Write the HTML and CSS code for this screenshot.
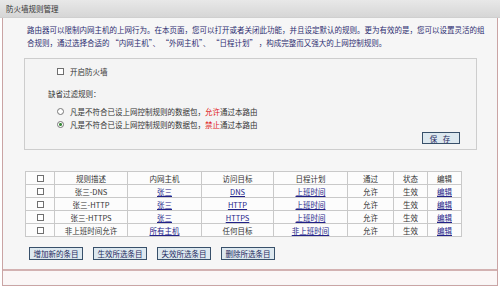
FILE: index.html
```
<!DOCTYPE html>
<html lang="zh-CN">
<head>
  <meta charset="UTF-8" />
  <title>防火墙规则管理</title>
  <link rel="stylesheet" href="styles.css">
</head>
<body>

  <!-- 标题栏 -->
  <div class="title-bar">防火墙规则管理</div>

  <div class="frame">
    <div class="main">

      <!-- 说明文字 -->
      <p class="desc">
        路由器可以限制内网主机的上网行为。在本页面，您可以打开或者关闭此功能，并且设定默认的规则。更为有效的是，您可以设置灵活的组<br>
        合规则，通过选择合适的 “内网主机”、 “外网主机”、 “日程计划” ，构成完整而又强大的上网控制规则。
      </p>

      <!-- 开关 + 缺省规则 -->
      <div class="setting-box">
        <label class="row switch-row"><input type="checkbox" class="chk" /> 开启防火墙</label>
        <div class="row rule-title">缺省过滤规则：</div>
        <label class="row radio-row"><input type="radio" name="def" class="rad" /> 凡是不符合已设上网控制规则的数据包，<span class="red">允许</span>通过本路由</label>
        <label class="row radio-row"><input type="radio" name="def" class="rad" checked /> 凡是不符合已设上网控制规则的数据包，<span class="red">禁止</span>通过本路由</label>
        <div class="save-row"><button class="btn save-btn">保 存</button></div>
      </div>

      <!-- 规则列表 -->
      <table class="rules">
        <colgroup>
          <col style="width:29px"><col style="width:73px"><col style="width:74px"><col style="width:72px">
          <col style="width:74px"><col style="width:46px"><col style="width:34px"><col style="width:34px">
        </colgroup>
        <tr>
          <td><input type="checkbox" class="chk" /></td>
          <td>规则描述</td><td>内网主机</td><td>访问目标</td><td>日程计划</td><td>通过</td><td>状态</td><td>编辑</td>
        </tr>
        <tr>
          <td><input type="checkbox" class="chk" /></td>
          <td>张三-DNS</td><td><a href="#">张三</a></td><td><a href="#">DNS</a></td><td><a href="#">上班时间</a></td><td>允许</td><td>生效</td><td><a href="#">编辑</a></td>
        </tr>
        <tr>
          <td><input type="checkbox" class="chk" /></td>
          <td>张三-HTTP</td><td><a href="#">张三</a></td><td><a href="#">HTTP</a></td><td><a href="#">上班时间</a></td><td>允许</td><td>生效</td><td><a href="#">编辑</a></td>
        </tr>
        <tr>
          <td><input type="checkbox" class="chk" /></td>
          <td>张三-HTTPS</td><td><a href="#">张三</a></td><td><a href="#">HTTPS</a></td><td><a href="#">上班时间</a></td><td>允许</td><td>生效</td><td><a href="#">编辑</a></td>
        </tr>
        <tr>
          <td><input type="checkbox" class="chk" /></td>
          <td>非上班时间允许</td><td><a href="#">所有主机</a></td><td>任何目标</td><td><a href="#">非上班时间</a></td><td>允许</td><td>生效</td><td><a href="#">编辑</a></td>
        </tr>
      </table>

      <!-- 操作按钮 -->
      <div class="actions">
        <button class="btn">增加新的条目</button>
        <button class="btn">生效所选条目</button>
        <button class="btn">失效所选条目</button>
        <button class="btn">删除所选条目</button>
      </div>

    </div>
    <div class="foot"></div>
  </div>

</body>
</html>
```

FILE: styles.css
```
/* ===== 基础 ===== */
*{box-sizing:border-box}
body{
  margin:0;
  background:#fff;
  font-family:"Noto Sans CJK SC","DejaVu Sans",sans-serif;
  font-size:7.5px;
  color:#333;
}

/* ===== 标题栏 ===== */
.title-bar{
  height:18px;
  line-height:18px;
  padding-left:6px;
  background:linear-gradient(#e8e8e8,#d6d6d6);
  border-bottom:1px solid #cfcfcf;
  color:#333;
}

/* ===== 外框 ===== */
.frame{
  margin:0 2px;
  height:268px;
  border:1px solid #caa4a4;
  border-top:none;
  background:#f6f6f6;
}
.main{height:251px}
.foot{
  height:15px;
  border-top:2px solid #d3b1b1;
  background:#fbf6f6;
}

/* ===== 说明文字 ===== */
.desc{
  margin:0;
  padding:5px 0 0 24px;
  line-height:13px;
  color:#2c2c70;
  white-space:nowrap;
}

/* ===== 设置区 ===== */
.setting-box{
  margin:9px 0 0 21px;
  width:453px;
  height:92px;
  border:1px solid #cdcdcd;
  background:#f4f4f4;
  padding-top:6px;
}
.row{
  display:flex;
  align-items:center;
  height:13px;
  color:#333;
}
.switch-row{padding-left:32px}
.rule-title{padding-left:23px;margin-top:9px}
.radio-row{padding-left:32px}
.rule-title + .radio-row{margin-top:5px}
.red{color:#e01818}

.chk,.rad{
  appearance:none;
  -webkit-appearance:none;
  margin:0 6px 0 0;
  width:7px;
  height:7px;
  border:1px solid #6f6f6f;
  background:#fff;
}
.rad{border-radius:50%;border-color:#777}
.rad:checked{background:radial-gradient(circle,#3a8a3a 0 1.3px,#fff 1.6px)}

.save-row{
  display:flex;
  justify-content:flex-end;
  padding-right:16px;
  margin-top:1px;
}

/* ===== 按钮 ===== */
.btn{
  height:13px;
  padding:0 3px;
  font:inherit;
  line-height:11px;
  color:#1e2a60;
  background:#dde8ef;
  border:1px solid #38506a;
  cursor:pointer;
}
.save-btn{width:38px;height:12px;letter-spacing:2px}

/* ===== 规则表 ===== */
.rules{
  margin:21px 0 0 22px;
  border-collapse:collapse;
  table-layout:fixed;
  width:437px;
  background:#fcfcfc;
}
.rules td{
  height:13px;
  padding:0;
  border:1px solid #c9c9c9;
  text-align:center;
  line-height:11px;
  color:#333;
}
.rules td .chk{margin:2px 0 0}
.rules a{color:#222288;text-decoration:underline}

/* ===== 操作按钮行 ===== */
.actions{
  display:flex;
  gap:10px;
  margin:10px 0 0 26px;
}
.actions .btn{width:54px}
```
